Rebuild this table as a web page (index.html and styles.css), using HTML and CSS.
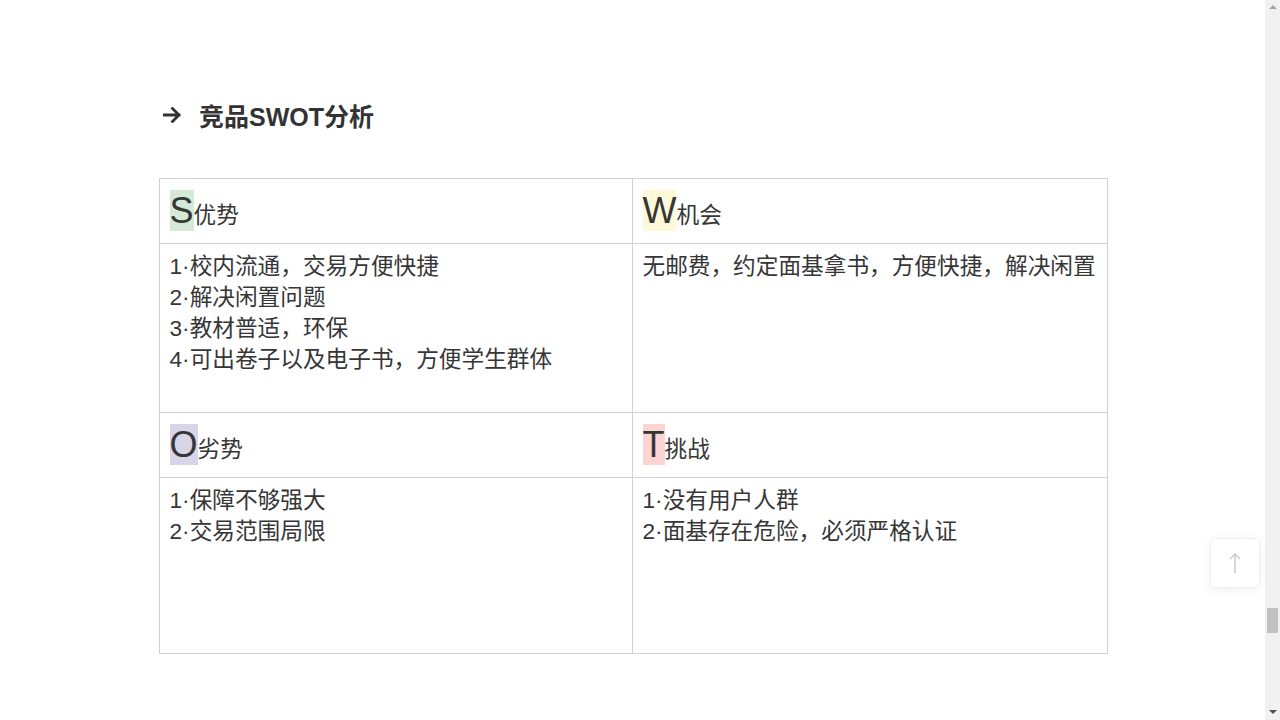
FILE: index.html
```html
<!DOCTYPE html>
<html lang="zh-CN">
<head>
<meta charset="utf-8">
<title>竞品SWOT分析</title>
<link rel="stylesheet" href="styles.css">
</head>
<body>
<div class="page">
  <main class="content">
    <h2 class="title">
      <svg class="title-arrow" width="18" height="16" viewBox="0 0 18 16"><path d="M1 8H16M9.5 1.5L16 8L9.5 14.5" fill="none" stroke="#333" stroke-width="2.8" stroke-linecap="square"/></svg>
      <span>竞品SWOT分析</span>
    </h2>
    <table class="swot">
      <colgroup><col class="col-a"><col class="col-b"></colgroup>
      <tr class="head-row">
        <td><span class="big big-s">S</span>优势</td>
        <td><span class="big big-w">W</span>机会</td>
      </tr>
      <tr class="body-row body-row-1">
        <td>1·校内流通，交易方便快捷<br>2·解决闲置问题<br>3·教材普适，环保<br>4·可出卷子以及电子书，方便学生群体</td>
        <td>无邮费，约定面基拿书，方便快捷，解决闲置</td>
      </tr>
      <tr class="head-row">
        <td><span class="big big-o">O</span>劣势</td>
        <td><span class="big big-t">T</span>挑战</td>
      </tr>
      <tr class="body-row body-row-2">
        <td>1·保障不够强大<br>2·交易范围局限</td>
        <td>1·没有用户人群<br>2·面基存在危险，必须严格认证</td>
      </tr>
    </table>
  </main>
  <div class="scrollbar">
    <div class="sb-btn sb-up"></div>
    <div class="sb-track"><div class="sb-thumb"></div></div>
    <div class="sb-btn sb-down"></div>
  </div>
</div>
<button class="to-top" aria-label="回到顶部">
  <svg width="14" height="22" viewBox="0 0 14 22"><path d="M7 21V2M2 7L7 2L12 7" fill="none" stroke="#c8c8c8" stroke-width="1.4"/></svg>
</button>
</body>
</html>
```
FILE: styles.css
```css
html, body {
  margin: 0;
  padding: 0;
  height: 100%;
  overflow: hidden;
  background: #fff;
}
body {
  font-family: "Liberation Sans", "Noto Sans CJK SC", sans-serif;
  color: #333;
}
.page {
  display: flex;
  height: 100vh;
}
.content {
  flex: 1;
  padding: 99px 0 0 1px;
}
.title {
  display: flex;
  align-items: center;
  gap: 18px;
  width: 944px;
  margin: 0 auto;
  padding-left: 4px;
  height: 32px;
  font-size: 25px;
  font-weight: bold;
  color: #333;
}
.title-arrow {
  display: block;
}
.swot {
  width: 948px;
  margin: 47px auto 0;
  border-collapse: collapse;
  table-layout: fixed;
  font-size: 22.67px;
  line-height: 31px;
  color: #363636;
}
.col-a { width: 473px; }
.col-b { width: 475px; }
.swot td {
  border: 1px solid #d2d2d2;
  padding: 7px 10px 0 10px;
  vertical-align: top;
  white-space: nowrap;
}
.head-row td {
  height: 65px;
  padding: 0 10px 2px 10px;
  vertical-align: middle;
  box-sizing: border-box;
}
.body-row-1 td { height: 169px; box-sizing: border-box; }
.body-row-2 td { height: 176px; box-sizing: border-box; }
.big {
  font-family: "Liberation Sans", sans-serif;
  font-size: 36px;
  line-height: 41px;
  display: inline-block;
  vertical-align: baseline;
}
.big-s { background: #d5ead6; }
.big-w { background: #fdf9d8; }
.big-o { background: #d9d5e9; }
.big-t { background: #fcd5d3; }
.scrollbar {
  width: 15px;
  background: #f1f1f1;
  display: flex;
  flex-direction: column;
}
.sb-btn {
  height: 15px;
  position: relative;
}
.sb-down::after {
  content: "";
  position: absolute;
  left: 4px;
  top: 5px;
  border-left: 4px solid transparent;
  border-right: 4px solid transparent;
  border-top: 4px solid #505050;
}
.sb-up::after {
  content: "";
  position: absolute;
  left: 4px;
  top: 5px;
  border-left: 4px solid transparent;
  border-right: 4px solid transparent;
  border-bottom: 4px solid #a3a3a3;
}
.sb-track {
  flex: 1;
  padding-top: 593px;
}
.sb-thumb {
  margin: 0 2px 0 2px;
  height: 25px;
  background: #c1c1c1;
}
.to-top {
  position: fixed;
  left: 1210px;
  top: 538px;
  width: 50px;
  height: 50px;
  border: 1px solid #f0f0f0;
  border-radius: 5px;
  background: #fff;
  box-shadow: 0 2px 12px rgba(0,0,0,0.06);
  display: flex;
  align-items: center;
  justify-content: center;
  padding: 0;
}
.to-top svg { display: block; }
```
